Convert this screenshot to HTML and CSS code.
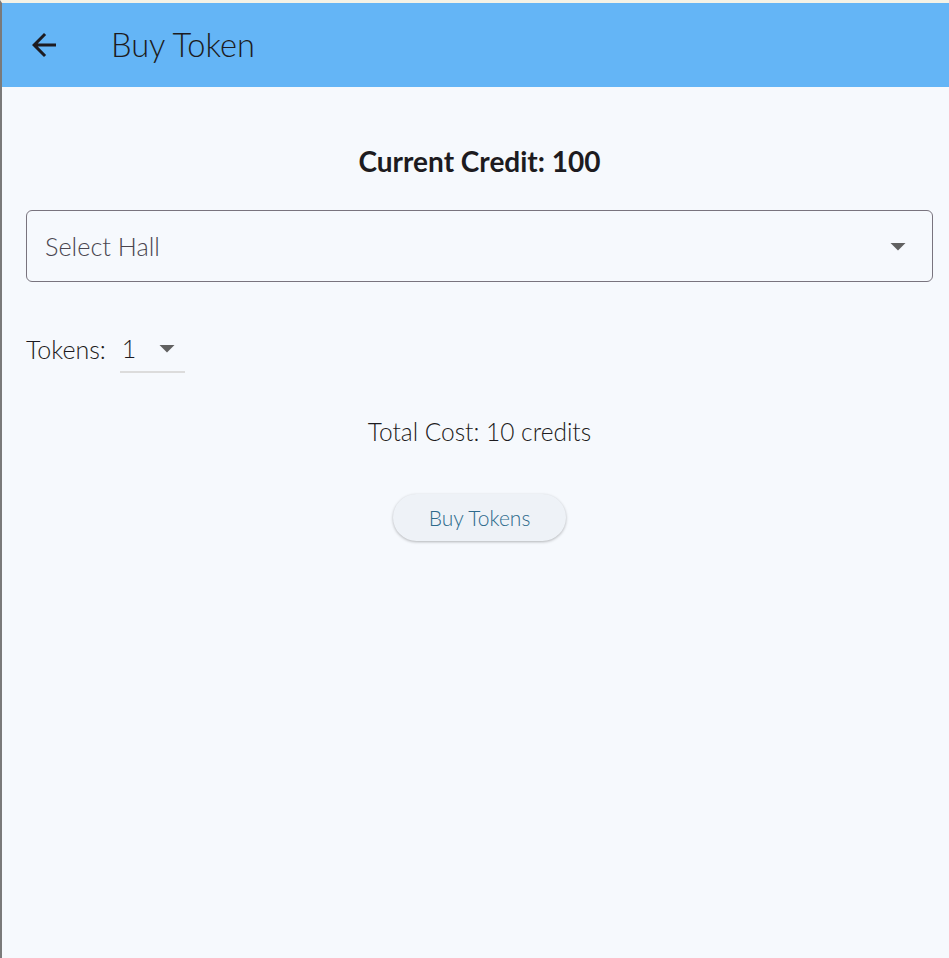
FILE: index.html
```html
<!DOCTYPE html>
<html lang="en">
<head>
<meta charset="utf-8">
<title>Buy Token</title>
<link rel="stylesheet" href="styles.css">
</head>
<body>
<div class="frame">
  <header class="appbar">
    <div class="leading">
      <svg class="icon" viewBox="0 0 24 24" width="36" height="36" aria-hidden="true">
        <path d="M20 11H7.83l5.59-5.59L12 4l-8 8 8 8 1.41-1.41L7.83 13H20v-2z" fill="#1d1b20"/>
      </svg>
    </div>
    <h1 class="title">Buy Token</h1>
  </header>
  <main class="content">
    <div class="credit">Current Credit: 100</div>
    <div class="select">
      <span class="select-hint">Select Hall</span>
      <svg class="icon" viewBox="0 0 24 24" width="36" height="36" aria-hidden="true">
        <path d="M7 10l5 5 5-5z" fill="#616161"/>
      </svg>
    </div>
    <div class="tokens-row">
      <span class="tokens-label">Tokens:</span>
      <div class="dropdown">
        <span class="dropdown-value">1</span>
        <svg class="icon" viewBox="0 0 24 24" width="36" height="36" aria-hidden="true">
          <path d="M7 10l5 5 5-5z" fill="#616161"/>
        </svg>
      </div>
    </div>
    <div class="total">Total Cost: 10 credits</div>
    <div class="actions">
      <button class="buy-btn" type="button">Buy Tokens</button>
    </div>
  </main>
</div>
</body>
</html>
```

FILE: styles.css
```css
html, body {
  margin: 0;
  padding: 0;
  height: 100%;
}

body {
  font-family: "Lato", "Liberation Sans", sans-serif;
  background: #f6f9fd;
  color: #1d1b20;
}

.frame {
  min-height: 100vh;
  box-sizing: border-box;
  border-left: 2px solid #7a7a7a;
  border-top: 3px solid #f4f2e6;
  display: flex;
  flex-direction: column;
}

.appbar {
  height: 84px;
  background: #64b5f6;
  display: flex;
  align-items: center;
}

.leading {
  width: 84px;
  height: 84px;
  display: flex;
  align-items: center;
  justify-content: center;
}

.icon {
  display: block;
  flex: none;
}

.title {
  margin: 0 0 0 25px;
  font-size: 32.6px;
  font-weight: 300;
  line-height: 40px;
  color: #1d1b20;
}

.content {
  padding: 58px 16px 0 24px;
  display: flex;
  flex-direction: column;
}

.credit {
  text-align: center;
  font-size: 28px;
  font-weight: 700;
  line-height: 32px;
}

.select {
  margin-top: 33px;
  height: 72px;
  box-sizing: border-box;
  border: 1px solid #79747e;
  border-radius: 6px;
  display: flex;
  align-items: center;
  justify-content: space-between;
  padding: 0 16px 0 18px;
}

.select-hint {
  font-size: 25.3px;
  font-weight: 300;
  color: #49454f;
  line-height: 32px;
}

.tokens-row {
  margin-top: 43px;
  display: flex;
  align-items: center;
  height: 48px;
}

.tokens-label {
  font-size: 25px;
  font-weight: 300;
  line-height: 32px;
  margin-right: 14px;
}

.dropdown {
  width: 65px;
  height: 48px;
  box-sizing: border-box;
  border-bottom: 2px solid #dcdcdc;
  display: flex;
  align-items: center;
  justify-content: space-between;
}

.dropdown-value {
  font-size: 25px;
  font-weight: 300;
  line-height: 32px;
  padding-left: 2px;
}

.total {
  margin-top: 43px;
  text-align: center;
  font-size: 24.5px;
  font-weight: 300;
  line-height: 32px;
}

.actions {
  margin-top: 46px;
  display: flex;
  justify-content: center;
}

.buy-btn {
  height: 47px;
  padding: 0 36px;
  border: none;
  border-radius: 24px;
  background: #eef2f7;
  color: #2d6a8c;
  font-family: "Lato", "Liberation Sans", sans-serif;
  font-size: 21px;
  font-weight: 300;
  box-shadow: 0 1px 3px rgba(0, 0, 0, 0.28);
  cursor: pointer;
}
```
